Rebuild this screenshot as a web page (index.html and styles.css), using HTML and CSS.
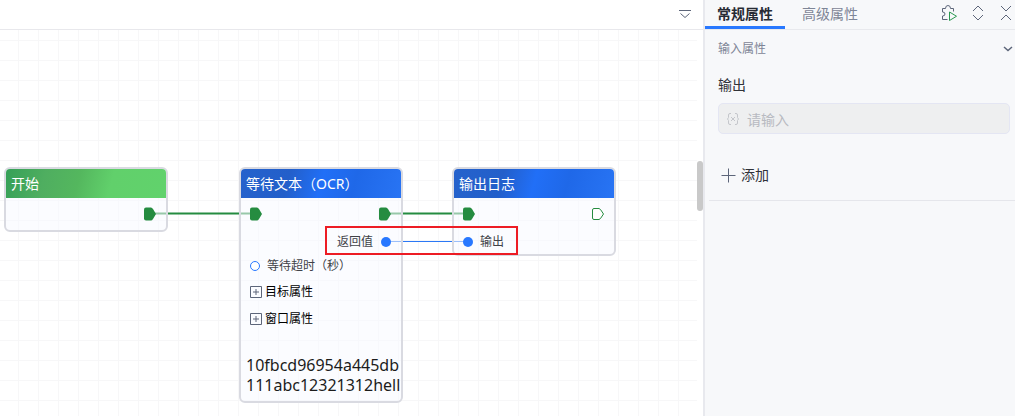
FILE: index.html
```html
<!DOCTYPE html>
<html lang="zh-CN">
<head>
<meta charset="utf-8">
<title>流程编辑器</title>
<link rel="stylesheet" href="styles.css">
</head>
<body>
<div class="app">
  <main class="editor">
    <header class="toolbar">
      <button class="icon-btn" type="button" aria-label="折叠">
        <svg width="14" height="12" viewBox="0 0 14 12"><path d="M1 2.500h12M2.500 5.500L7 9.500l4.500-4"/></svg>
      </button>
    </header>
    <div class="canvas">
      <svg class="wires" width="697" height="386">
        <path class="flow-wire" d="M152 183.500H256M386 183.500H468"/>
        <path class="data-wire" d="M386 211.500H468"/>
      </svg>

      <section class="node node-start">
        <h2 class="node-title green">开始</h2>
        <div class="row flow-row">
          <span></span>
          <svg class="port" width="14" height="14" viewBox="0 0 14 14"><path d="M3 .5H8Q9 .5 10 2L13 7 10 12Q9 13.500 8 13.500H3Q1 13.500 1 11.500V2.500Q1 .5 3 .5Z"/></svg>
        </div>
      </section>

      <section class="node node-ocr">
        <h2 class="node-title blue">等待文本（OCR）</h2>
        <div class="row flow-row">
          <svg class="port" width="14" height="14" viewBox="0 0 14 14"><path d="M3 .5H8Q9 .5 10 2L13 7 10 12Q9 13.500 8 13.500H3Q1 13.500 1 11.500V2.500Q1 .5 3 .5Z"/></svg>
          <svg class="port" width="14" height="14" viewBox="0 0 14 14"><path d="M3 .5H8Q9 .5 10 2L13 7 10 12Q9 13.500 8 13.500H3Q1 13.500 1 11.500V2.500Q1 .5 3 .5Z"/></svg>
        </div>
        <div class="row data-row out"><span>返回值</span><i class="dot"></i></div>
        <div class="row param-row"><i class="dot hollow"></i><span>等待超时（秒）</span></div>
        <button class="row group-row" type="button"><svg width="12" height="12" viewBox="0 0 12 12"><path d="M.5.5h11v11H.5zM3 6h6M6 3v6"/></svg>目标属性</button>
        <button class="row group-row" type="button"><svg width="12" height="12" viewBox="0 0 12 12"><path d="M.5.5h11v11H.5zM3 6h6M6 3v6"/></svg>窗口属性</button>
        <p class="note">10fbcd96954a445db<br>111abc12321312hell</p>
      </section>

      <section class="node node-log">
        <h2 class="node-title blue">输出日志</h2>
        <div class="row flow-row">
          <svg class="port" width="14" height="14" viewBox="0 0 14 14"><path d="M3 .5H8Q9 .5 10 2L13 7 10 12Q9 13.500 8 13.500H3Q1 13.500 1 11.500V2.500Q1 .5 3 .5Z"/></svg>
          <svg class="port open" width="14" height="14" viewBox="0 0 14 14"><path d="M3 1.500H8L9.500 2.500 12.500 7 9.500 11.500 8 12.500H3Q1.500 12.500 1.500 11V3Q1.500 1.500 3 1.500Z"/></svg>
        </div>
        <div class="row data-row"><i class="dot"></i><span>输出</span></div>
      </section>

      <div class="highlight"></div>
      <div class="scroll-thumb"></div>
    </div>
  </main>

  <aside class="panel">
    <header class="panel-head">
      <nav class="tabs">
        <button class="tab active" type="button">常规属性</button>
        <button class="tab" type="button">高级属性</button>
      </nav>
      <div class="tools">
        <button class="icon-btn" type="button" aria-label="运行">
          <svg width="18" height="18" viewBox="0 0 18 18"><path d="M7.500 15.500H2.500V12Q5 12 5 10T2.500 8V4.500H5.500Q5.500 1.500 8 1.500T10.500 4.500H13.500V7.500"/><path class="play" d="M9.500 8v8.500l7-4.250z"/></svg>
        </button>
        <button class="icon-btn" type="button" aria-label="全部展开">
          <svg width="12" height="16" viewBox="0 0 12 16"><path d="M1 6l5-5 5 5M1 10l5 5 5-5"/></svg>
        </button>
        <button class="icon-btn" type="button" aria-label="全部收起">
          <svg width="12" height="16" viewBox="0 0 12 16"><path d="M1 1l5 5 5-5M1 15l5-5 5 5"/></svg>
        </button>
      </div>
    </header>
    <section class="props">
      <button class="group-head" type="button">输入属性
        <svg width="10" height="8" viewBox="0 0 10 8"><path d="M1 2l4 3.500L9 2"/></svg>
      </button>
      <label class="field-label" for="output">输出</label>
      <div class="field">
        <svg width="12" height="14" viewBox="0 0 12 14"><path d="M4 1.500H3Q1.500 1.500 1.500 3V5.500L.5 7l1 1.500V11Q1.500 12.500 3 12.500H4M8 1.500H9Q10.500 1.500 10.500 3V5.500l1 1.500-1 1.500V11Q10.500 12.500 9 12.500H8M4 5l4 4M8 5L4 9"/></svg>
        <input id="output" type="text" placeholder="请输入" disabled>
      </div>
      <button class="add" type="button"><svg width="15" height="15" viewBox="0 0 15 15"><path d="M7.500.5v14M.5 7.500h14"/></svg>添加</button>
    </section>
  </aside>
</div>
</body>
</html>
```
FILE: styles.css
```css
* { box-sizing: border-box; }
body {
  margin: 0;
  font-family: "Noto Sans", "Noto Sans CJK SC", sans-serif;
  font-size: 14px;
  line-height: 20px;
  color: #303238;
}
button {
  font: inherit;
  color: inherit;
  background: none;
  border: 0;
  padding: 0;
  cursor: pointer;
}
svg { display: block; fill: none; stroke: #5c6579; flex: none; }
.app { display: flex; height: 100vh; overflow: hidden; }

/* Editor */
.editor { flex: 1; display: flex; flex-direction: column; min-width: 0; background: #fff; }
.toolbar {
  display: flex;
  align-items: center;
  justify-content: flex-end;
  height: 30px;
  padding: 0 11px 2px;
  border-bottom: 1px solid #e8e8ec;
}
.canvas { flex: 1; position: relative; overflow: hidden; }
.canvas::before {
  content: "";
  position: absolute;
  inset: 0 6px 0 0;
  background:
    linear-gradient(#f7f7f8 1px, transparent 1px) 0 10px / 20px 20px,
    linear-gradient(90deg, #f7f7f8 1px, transparent 1px) 18px 0 / 20px 20px;
}
.wires { position: absolute; left: 0; top: 0; }
.flow-wire { stroke: #258c40; stroke-width: 2; }
.data-wire { stroke: #2b78f5; stroke-width: 1; }

/* Nodes */
.node {
  position: absolute;
  top: 137px;
  width: 164px;
  border: 2px solid #d9dae1;
  border-radius: 6px;
  background: rgba(248, 250, 255, .55);
}
.node-start { left: 4px; height: 65px; }
.node-ocr { left: 239px; height: 236px; }
.node-log { left: 452px; height: 89px; }
.node-title {
  margin: 0;
  padding: 5px 5px 4px;
  font-size: 14px;
  font-weight: 400;
  line-height: 20px;
  color: #fff;
  border-radius: 4px 4px 0 0;
}
.green { background: linear-gradient(105deg, #35a057 0%, #4fae60 24%, #54b75e 45%, #61d06b 65%, #61d26c 100%); }
.blue { background: linear-gradient(105deg, #2562cc 0%, #235fca 30%, #216ff7 50%, #1f68e8 70%, #2874f4 100%); }
.row { display: flex; align-items: center; font-size: 12px; line-height: 18px; color: #404248; }
.flow-row { justify-content: space-between; height: 31px; padding: 0 9px 0 8px; }
.port { fill: #258c40; stroke: none; }
.port.open { fill: #fff; stroke: #258c40; }
.data-row { gap: 7px; height: 25px; padding: 0 10px 0 9px; }
.data-row.out { gap: 8px; justify-content: flex-end; }
.dot { width: 10px; height: 10px; border-radius: 50%; background: #2878ff; flex: none; }
.dot.hollow { background: #fff; border: 1px solid #2878ff; }
.param-row { gap: 7px; height: 24px; padding: 0 9px; }
.group-row { gap: 3px; width: 100%; height: 27px; padding: 0 9px; color: #000; }
.note {
  margin: 23px 0 0 5px;
  overflow: hidden;
  font-size: 16px;
  line-height: 20px;
  color: #1c1c1c;
  white-space: nowrap;
}
.highlight {
  position: absolute;
  left: 325px;
  top: 196px;
  width: 193px;
  height: 29px;
  border: 2px solid #ed1c24;
}
.scroll-thumb {
  position: absolute;
  right: 0;
  top: 131px;
  width: 6px;
  height: 50px;
  border-radius: 3px;
  background: #c9c9c9;
}

/* Properties panel */
.panel { width: 312px; flex: none; border-left: 2px solid #e8e9ee; background: #f7f8fa; }
.panel-head { display: flex; justify-content: space-between; height: 30px; border-bottom: 1px solid #e8e9ed; }
.tabs { display: flex; }
.tab { padding: 1px 12px 0; border-bottom: 3px solid transparent; color: #7e8596; height: 29px; margin-right: 5px; }
.tab.active { border-color: #2878ff; color: #272b34; font-weight: 700; }
.tools { display: flex; align-items: center; gap: 16px; padding: 0 3px 3px 0; }
.tools .icon-btn:first-child { margin-right: -2px; }
.play { stroke: #2a9950; }
.props {
  display: flex;
  flex-direction: column;
  margin-left: 4px;
  padding: 9px 5px 15px 9px;
  border-bottom: 1px solid #e5e6eb;
}
.group-head {
  display: flex;
  justify-content: space-between;
  align-items: center;
  margin-right: -3px;
  font-size: 12px;
  color: #7e8596;
}
.group-head svg { stroke-width: 1.5; }
.field-label { margin-top: 16px; }
.field {
  display: flex;
  align-items: center;
  gap: 8px;
  height: 31px;
  margin-top: 8px;
  padding: 0 9px 0 8px;
  border: 1px solid #e4e6f3;
  border-radius: 5px;
  background: #eeeff0;
}
.field svg { stroke: #c4c6cb; }
.field input {
  flex: 1;
  min-width: 0;
  padding: 2px 0 0;
  border: 0;
  background: none;
  font: inherit;
}
.field input::placeholder { color: #b8bac1; }
.add { display: flex; align-items: center; gap: 5px; align-self: flex-start; margin: 31px 0 0 3px; }
```
